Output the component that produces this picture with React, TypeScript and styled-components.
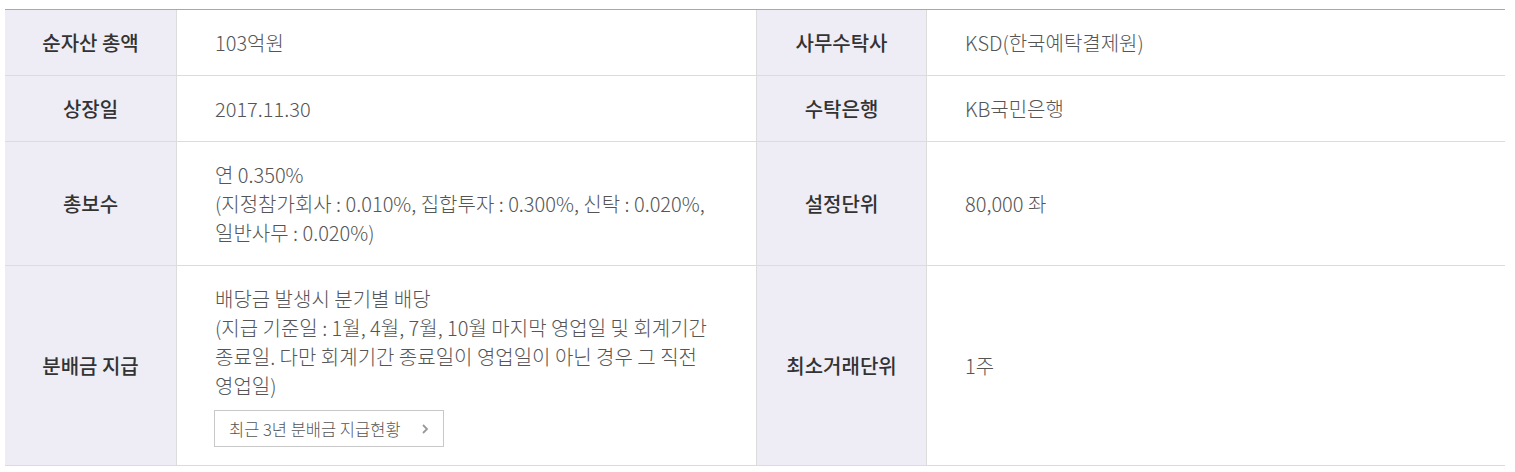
import React from "react";
import styled, { createGlobalStyle } from "styled-components";

const GlobalStyle = createGlobalStyle`
	body {
		margin: 0;
		background: #fff;
		font-family: "Noto Sans CJK KR", "Noto Sans", sans-serif;
	}
`;

const StyledPage = styled.div`
	padding: 9px 10px 0 5px;
`;

const StyledTable = styled.div`
	display: grid;
	grid-template-columns: 172px 580px 170px 1fr;
	border-top: 1px solid #a8a8a8;
`;

const StyledLabel = styled.div`
	display: flex;
	align-items: center;
	justify-content: center;
	background-color: #eeedf6;
	border-right: 1px solid #dcdcdc;
	border-bottom: 1px solid #dcdcdc;
	font-size: 20px;
	font-weight: 500;
	color: #333;
`;

const StyledValue = styled.div<{ $last?: boolean }>`
	display: flex;
	flex-direction: column;
	justify-content: center;
	align-items: flex-start;
	padding: 18px 20px 18px 38px;
	border-right: ${(p) => (p.$last ? "none" : "1px solid #dcdcdc")};
	border-bottom: 1px solid #dcdcdc;
	font-size: 20px;
	font-weight: 300;
	line-height: 29px;
	color: #555;
	min-height: 29px;
`;

const StyledLinkButton = styled.button`
	display: flex;
	align-items: center;
	gap: 20px;
	margin: 10px 0 0 -1px;
	height: 37px;
	padding: 0 14px 0 14px;
	border: 1px solid #c8c8c8;
	background: #fff;
	font-family: inherit;
	font-size: 16.5px;
	font-weight: 300;
	color: #555;
	cursor: pointer;
`;

const rows: { l1: string; v1: React.ReactNode; l2: string; v2: React.ReactNode }[] = [
	{ l1: "순자산 총액", v1: "103억원", l2: "사무수탁사", v2: "KSD(한국예탁결제원)" },
	{ l1: "상장일", v1: "2017.11.30", l2: "수탁은행", v2: "KB국민은행" },
	{
		l1: "총보수",
		v1: (
			<>
				<span>연 0.350%</span>
				<span>(지정참가회사 : 0.010%, 집합투자 : 0.300%, 신탁 : 0.020%,</span>
				<span>일반사무 : 0.020%)</span>
			</>
		),
		l2: "설정단위",
		v2: "80,000 좌",
	},
	{
		l1: "분배금 지급",
		v1: (
			<>
				<span>배당금 발생시 분기별 배당</span>
				<span>(지급 기준일 : 1월, 4월, 7월, 10월 마지막 영업일 및 회계기간</span>
				<span>종료일. 다만 회계기간 종료일이 영업일이 아닌 경우 그 직전</span>
				<span>영업일)</span>
				<StyledLinkButton>
					최근 3년 분배금 지급현황
					<svg width="8" height="12" viewBox="0 0 8 12">
						<path d="M2 2l4 4-4 4" fill="none" stroke="#999" strokeWidth="1.8" />
					</svg>
				</StyledLinkButton>
			</>
		),
		l2: "최소거래단위",
		v2: "1주",
	},
];

const App: React.FC = () => {
	return (
		<StyledPage>
			<GlobalStyle />
			<StyledTable>
				{rows.map((r) => (
					<React.Fragment key={r.l1}>
						<StyledLabel>{r.l1}</StyledLabel>
						<StyledValue>{r.v1}</StyledValue>
						<StyledLabel>{r.l2}</StyledLabel>
						<StyledValue $last>{r.v2}</StyledValue>
					</React.Fragment>
				))}
			</StyledTable>
		</StyledPage>
	);
};

export default App;
